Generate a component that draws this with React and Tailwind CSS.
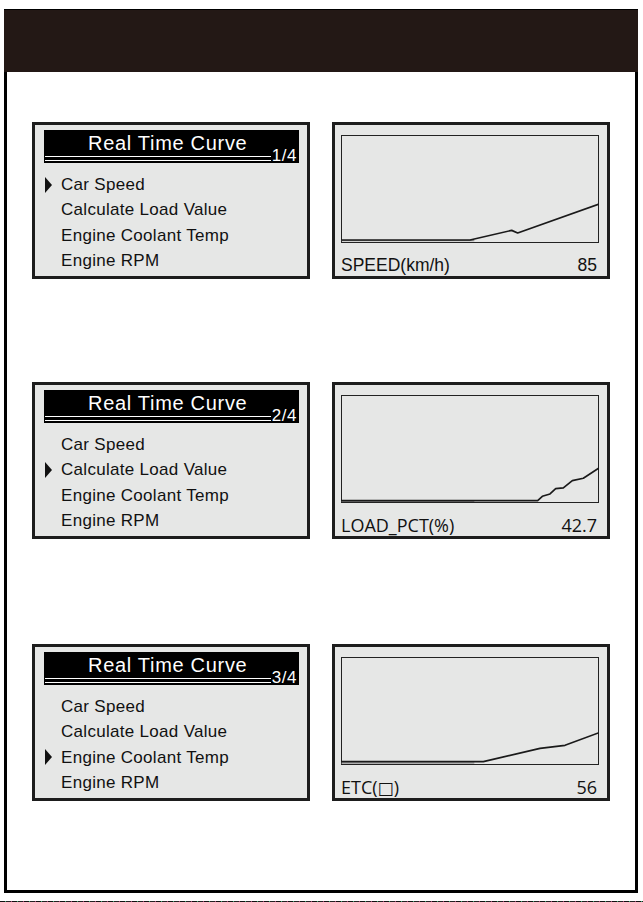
import React from 'react';

const items = ['Car Speed', 'Calculate Load Value', 'Engine Coolant Temp', 'Engine RPM'];

// chart polylines are in a 3x space, same as the frame's viewBox
const screens = [
    {
        page: '1/4',
        selected: 0,
        label: 'SPEED(km/h)',
        value: '85',
        labelFont: "font-['Liberation_Sans',Arial,sans-serif] text-[17.5px]",
        frame: '48 60 774 325',
        base: 378,
        line: '48,376 435,376 560,347 578,355 822,268',
    },
    {
        page: '2/4',
        selected: 1,
        label: 'LOAD_PCT(%)',
        value: '42.7',
        labelFont: "font-['Open_Sans',sans-serif] text-[18px]",
        frame: '48 62 774 323',
        base: 380,
        line: '48,378 638,378 652,365 675,358 692,342 715,340 742,318 775,311 822,280',
    },
    {
        page: '3/4',
        selected: 2,
        label: (
            <>
                ETC(<span className="text-[17px] font-['DejaVu_Sans',sans-serif]">{'\u25A1'}</span>)
            </>
        ),
        value: '56',
        labelFont: "font-['Open_Sans',sans-serif] text-[18px]",
        frame: '48 58 774 324',
        base: 376,
        line: '48,372 475,372 645,332 720,323 822,285',
    },
];

const Arrow = () => (
    <svg width="7" height="16" viewBox="0 0 7 16" className="block">
        <polygon points="0,0 7,8 0,16" fill="#111" />
    </svg>
);

const MenuPanel = ({ page, selected }) => (
    <div className="w-[278px] h-[157px] border-[3px] border-[#1d1d1d] bg-[#e6e7e6] pt-[5px] pl-[9px] pr-[8px]">
        <div className="h-[33px] bg-black flex items-end">
            <div className="flex-1 flex flex-col pb-[2px]">
                <div className="h-[25px] mt-[2px] pl-[44px] leading-[25px] text-white text-[20px] tracking-[0.7px] whitespace-nowrap font-['Liberation_Sans',Arial,sans-serif]">
                    Real Time Curve
                </div>
                <div className="h-[5px] ml-[1px] border-t-[1.5px] border-b-[1.5px] border-white" />
            </div>
            <div className="pl-[1px] pr-[2px] leading-[15px] text-white text-[17px] tracking-[0.5px] font-['Liberation_Sans',Arial,sans-serif]">
                {page}
            </div>
        </div>
        <div className="mt-[9px] -ml-[9px] font-['Liberation_Sans',Arial,sans-serif] text-[17px] tracking-[0.3px] text-[#111]">
            {items.map((item, i) => (
                <div key={item} className="h-[25.3px] leading-[25.3px] flex items-center pl-[10px]">
                    <div className="w-[16px]">{i === selected && <Arrow />}</div>
                    <span className="whitespace-nowrap">{item}</span>
                </div>
            ))}
        </div>
    </div>
);

const ChartPanel = ({ label, value, labelFont, frame, base, line }) => {
    const [fx, fy, fw, fh] = frame.split(' ').map(Number);
    return (
        <div className="w-[278px] h-[157px] border-[3px] border-[#1d1d1d] bg-[#e6e7e6] pt-[10px] pl-[6px]">
            <svg width="258" height="108" viewBox={frame} preserveAspectRatio="none" className="block">
                <rect x={fx + 1.5} y={fy + 1.5} width={fw - 3} height={fh - 3} fill="none" stroke="#222" strokeWidth="3" />
                <line x1={fx} y1={base} x2={fx + 400} y2={base} stroke="#777" strokeWidth="3" />
                <polyline points={line} fill="none" stroke="#1a1a1a" strokeWidth="5" strokeLinejoin="round" />
            </svg>
            <div className={`mt-[12px] pr-[10px] flex justify-between leading-[20px] text-[#111] ${labelFont}`}>
                <span>{label}</span>
                <span>{value}</span>
            </div>
        </div>
    );
};

export default function App() {
    return (
        <div className="w-[643px] h-[902px] bg-white flex flex-col">
            <div className="mt-[9px] ml-[4px] w-[634px] h-[884px] border-[3px] border-t-0 border-black flex flex-col">
                <div className="h-[63px] -mx-[3px] bg-[#231815] border-t-[1px] border-black" />
                <div className="flex flex-col pl-[25px]">
                    {screens.map((s, i) => (
                        <div
                            key={s.page}
                            className={`flex gap-[22px] ${i === 0 ? 'mt-[50px]' : i === 1 ? 'mt-[103px]' : 'mt-[105px]'}`}
                        >
                            <MenuPanel page={s.page} selected={s.selected} />
                            <ChartPanel {...s} />
                        </div>
                    ))}
                </div>
            </div>
            <div className="mt-auto h-[1px] bg-[repeating-linear-gradient(90deg,#111_0px,#111_5px,#4a7_5px,#4a7_6px,#222_6px,#222_11px,#a47_11px,#a47_12px)]" />
        </div>
    );
}
